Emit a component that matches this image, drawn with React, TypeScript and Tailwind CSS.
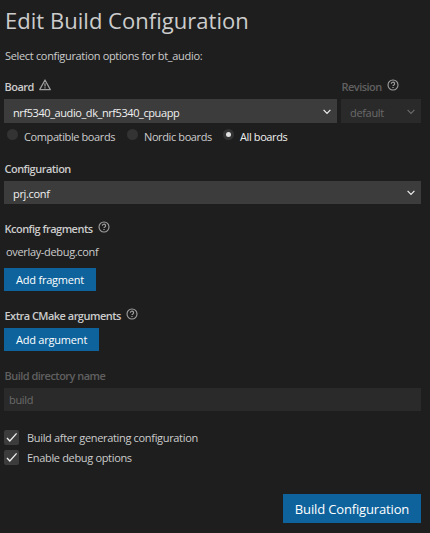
import type { ReactNode } from "react";

function Help({ className = "" }: { className?: string }) {
  return (
    <svg viewBox="0 0 12 12" className={`mt-px h-3 w-3 shrink-0 ${className}`} fill="none" stroke="#a0a0a0">
      <circle cx="6" cy="6" r="5" strokeWidth="1.1" />
      <path d="M4.4 4.8a1.6 1.5 0 1 1 2.5 1.1C6.2 6.3 6 6.5 6 7.1" strokeWidth="1.2" />
      <path d="M6 7.9v1.2" strokeWidth="1.3" />
    </svg>
  );
}

function Warning() {
  return (
    <svg viewBox="0 0 12 12" className="mt-px ml-[5px] h-3 w-3 shrink-0" fill="none" stroke="#a0a0a0">
      <path d="M6 1 L11.3 10.6 H0.7 Z" strokeWidth="1.2" strokeLinejoin="round" />
      <path d="M6 4.2v3.2M6 8.2v1.2" strokeWidth="1.2" />
    </svg>
  );
}

function Chevron() {
  return (
    <svg viewBox="0 0 8 6" className="mt-px h-1.5 w-2 shrink-0" fill="none" stroke="currentColor">
      <path d="M0.6 0.9 L4 4.4 L7.4 0.9" strokeWidth="1.2" />
    </svg>
  );
}

function Radio({ checked = false }: { checked?: boolean }) {
  return (
    <span className="flex h-[11px] w-[11px] shrink-0 items-center justify-center rounded-full bg-[#333333]">
      {checked && <span className="h-[5px] w-[5px] rounded-full bg-[#e0e0e0]" />}
    </span>
  );
}

function Label({ children, icon, className = "" }: { children: ReactNode; icon?: ReactNode; className?: string }) {
  return (
    <div className={`flex h-4 font-semibold tracking-[-0.52px] ${className}`}>
      <span className="pt-px pl-[0.5px]">{children}</span>
      {icon}
    </div>
  );
}

function CheckRow({ children }: { children: ReactNode }) {
  return (
    <label className="flex h-[15px] items-center gap-2">
      <span className="flex h-[15px] w-[15px] shrink-0 items-center justify-center rounded-[2px] bg-[#3c3c3c]">
        <svg viewBox="0 0 15 15" className="h-[15px] w-[15px]" fill="none" stroke="#f0f0f0">
          <path d="M3 8 L5.8 11 L12.6 3.4" strokeWidth="1.3" />
        </svg>
      </span>
      {children}
    </label>
  );
}

export default function App() {
  return (
    <main className="flex h-[533px] w-[430px] flex-col overflow-hidden bg-[#1e1e1e] pt-2 pr-[9px] pl-1 font-['Open_Sans','Noto_Sans',sans-serif] text-[11px] leading-4 tracking-[-0.33px] whitespace-nowrap text-[#cccccc]">
      <h1 className="h-6 pl-px text-[22px] leading-6 tracking-[0.03px]">Edit Build Configuration</h1>
      <p className="mt-4 h-[15px] pl-px">Select configuration options for bt_audio:</p>

      <div className="mt-[15px] flex gap-1">
        <div className="w-[333px]">
          <Label icon={<Warning />}>Board</Label>
          <div className="mt-[5px] flex h-6 items-center justify-between bg-[#3c3c3c] pr-[6px] pl-[9px] text-[#f0f0f0]">
            <span className="pt-[3px] tracking-[-0.42px]">nrf5340_audio_dk_nrf5340_cpuapp</span>
            <Chevron />
          </div>
        </div>
        <div className="w-20">
          <Label icon={<Help className="ml-[5px]" />} className="text-[#606060]">Revision</Label>
          <div className="mt-[5px] flex h-6 items-center justify-between bg-[#2a2a2a] pr-[6px] pl-[9px] text-[#6a6a6a]">
            <span className="pt-[3px]">default</span>
            <Chevron />
          </div>
        </div>
      </div>

      <div className="mt-[6px] flex h-[15px] pl-[3px] tracking-[-0.39px]">
        <label className="flex w-[120px] gap-1.5"><Radio /><span>Compatible boards</span></label>
        <label className="flex w-24 gap-1.5"><Radio /><span>Nordic boards</span></label>
        <label className="flex gap-1.5 text-[#f0f0f0]"><Radio checked /><span>All boards</span></label>
      </div>

      <Label className="mt-4">Configuration</Label>
      <div className="mt-[5px] flex h-[23px] items-center justify-between bg-[#3c3c3c] pr-[6px] pl-[9px] text-[#f0f0f0]">
        <span className="pt-0.5">prj.conf</span>
        <Chevron />
      </div>

      <Label className="mt-4" icon={<Help className="ml-[5px]" />}>Kconfig fragments</Label>
      <div className="mt-2 h-4 pl-0.5">overlay-debug.conf</div>
      <button className="mt-2 h-[23px] w-[92px] bg-[#0e639c] font-medium tracking-[-0.2px] text-white">Add fragment</button>

      <Label className="mt-4" icon={<Help className="ml-[5px]" />}>Extra CMake arguments</Label>
      <button className="mt-[5px] h-[23px] w-[95px] bg-[#0e639c] font-medium tracking-[-0.2px] text-white">Add argument</button>

      <Label className="mt-4 text-[#606060]">Build directory name</Label>
      <div className="mt-[5px] flex h-[23px] items-center bg-[#2a2a2a] pl-[5px] text-[#6a6a6a]">build</div>

      <div className="mt-[19px] flex flex-col gap-[5px]">
        <CheckRow><span>Build after generating configuration</span></CheckRow>
        <CheckRow><span>Enable debug options</span></CheckRow>
      </div>

      <button className="mt-[29px] h-[29px] w-[138px] self-end bg-[#0e639c] text-[13px] font-medium tracking-[-0.15px] text-white">Build Configuration</button>
    </main>
  );
}
